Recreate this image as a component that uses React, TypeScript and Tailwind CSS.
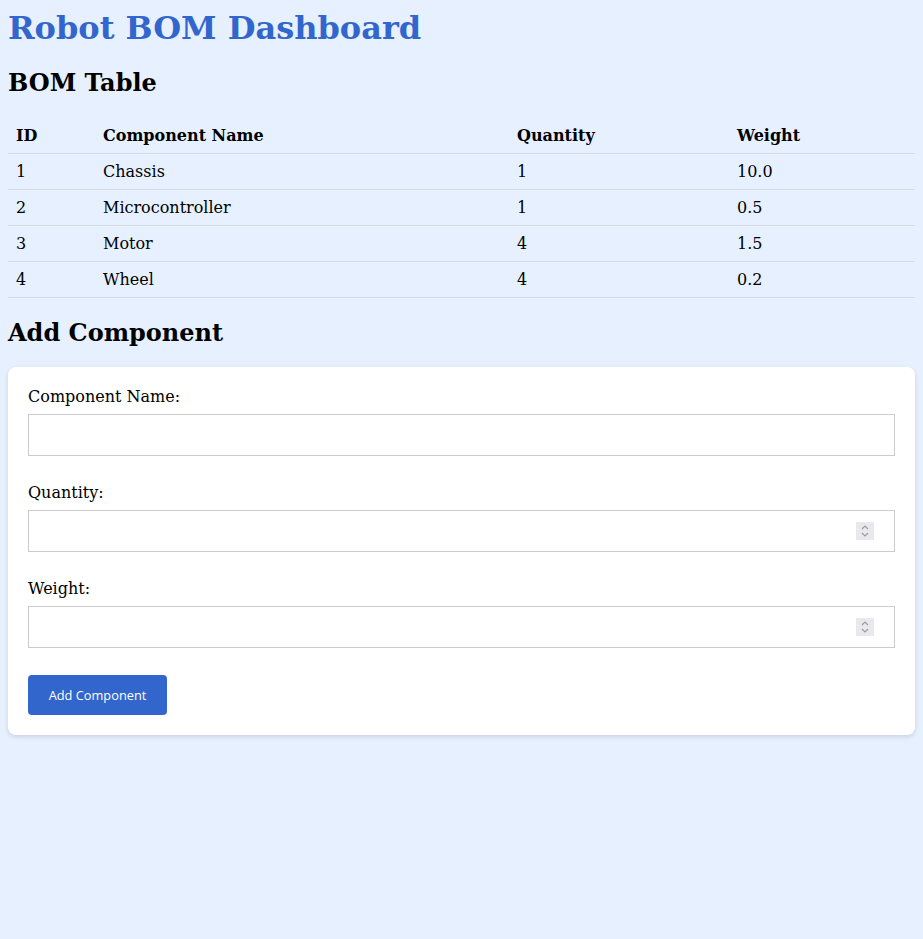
import React from "react";

const rows = [
  { id: 1, name: "Chassis", qty: 1, weight: "10.0" },
  { id: 2, name: "Microcontroller", qty: 1, weight: "0.5" },
  { id: 3, name: "Motor", qty: 4, weight: "1.5" },
  { id: 4, name: "Wheel", qty: 4, weight: "0.2" },
];

function Spinner() {
  return (
    <div className="pointer-events-none absolute right-[21px] top-[12px] flex h-[18px] w-[18px] items-center justify-center bg-[#e9e9ed]">
      <svg width="10" height="14" viewBox="0 0 10 14" fill="none" stroke="#9a9aa2" strokeWidth="1.2">
        <path d="M2 5 L5 2 L8 5" />
        <path d="M2 9 L5 12 L8 9" />
      </svg>
    </div>
  );
}

export default function App() {
  const serif = { fontFamily: '"DejaVu Serif", serif' };
  return (
    <div className="min-h-[939px] bg-[#e6f0ff] px-[8px] pt-[10px] text-black" style={serif}>
      <h1 className="m-0 text-[32px] font-bold leading-[37px] text-[#3366cc]">Robot BOM Dashboard</h1>
      <h2 className="mt-[22px] text-[24px] font-bold leading-[28px]">BOM Table</h2>
      <table className="mt-[20px] w-full table-fixed border-collapse text-[16px]">
        <colgroup>
          <col className="w-[87px]" />
          <col className="w-[414px]" />
          <col className="w-[220px]" />
          <col />
        </colgroup>
        <thead>
          <tr className="border-b border-[#d9dde3]">
            <th className="h-[36px] px-[8px] pt-[2px] text-left align-middle font-bold">ID</th>
            <th className="h-[36px] px-[8px] pt-[2px] text-left align-middle font-bold">Component Name</th>
            <th className="h-[36px] px-[8px] pt-[2px] text-left align-middle font-bold">Quantity</th>
            <th className="h-[36px] px-[8px] pt-[2px] text-left align-middle font-bold">Weight</th>
          </tr>
        </thead>
        <tbody>
          {rows.map((r) => (
            <tr key={r.id} className="border-b border-[#d9dde3]">
              <td className="h-[36px] px-[8px] pt-[2px] align-middle">{r.id}</td>
              <td className="h-[36px] px-[8px] pt-[2px] align-middle">{r.name}</td>
              <td className="h-[36px] px-[8px] pt-[2px] align-middle">{r.qty}</td>
              <td className="h-[36px] px-[8px] pt-[2px] align-middle">{r.weight}</td>
            </tr>
          ))}
        </tbody>
      </table>
      <h2 className="mt-[21px] text-[24px] font-bold leading-[28px]">Add Component</h2>
      <div className="mt-[20px] rounded-[8px] bg-white p-[20px] shadow-[0_2px_5px_rgba(0,0,0,0.12)]">
        <label className="block text-[16px] leading-[19px]">Component Name:</label>
        <input type="text" className="mt-[8px] block h-[42px] w-full border border-[#cccccc] bg-white px-[10px] text-[16px] outline-none" />
        <label className="mt-[27px] block text-[16px] leading-[19px]">Quantity:</label>
        <div className="relative mt-[8px]">
          <input type="text" inputMode="numeric" className="block h-[42px] w-full border border-[#cccccc] bg-white pl-[10px] pr-[44px] text-[16px] outline-none" />
          <Spinner />
        </div>
        <label className="mt-[27px] block text-[16px] leading-[19px]">Weight:</label>
        <div className="relative mt-[8px]">
          <input type="text" inputMode="decimal" className="block h-[42px] w-full border border-[#cccccc] bg-white pl-[10px] pr-[44px] text-[16px] outline-none" />
          <Spinner />
        </div>
        <button
          className="mt-[27px] block h-[40px] w-[139px] rounded-[4px] bg-[#3366cc] pt-[2px] text-center text-[12.8px] text-white"
          style={{ fontFamily: '"Open Sans", "Noto Sans", sans-serif' }}
        >
          Add Component
        </button>
      </div>
    </div>
  );
}
